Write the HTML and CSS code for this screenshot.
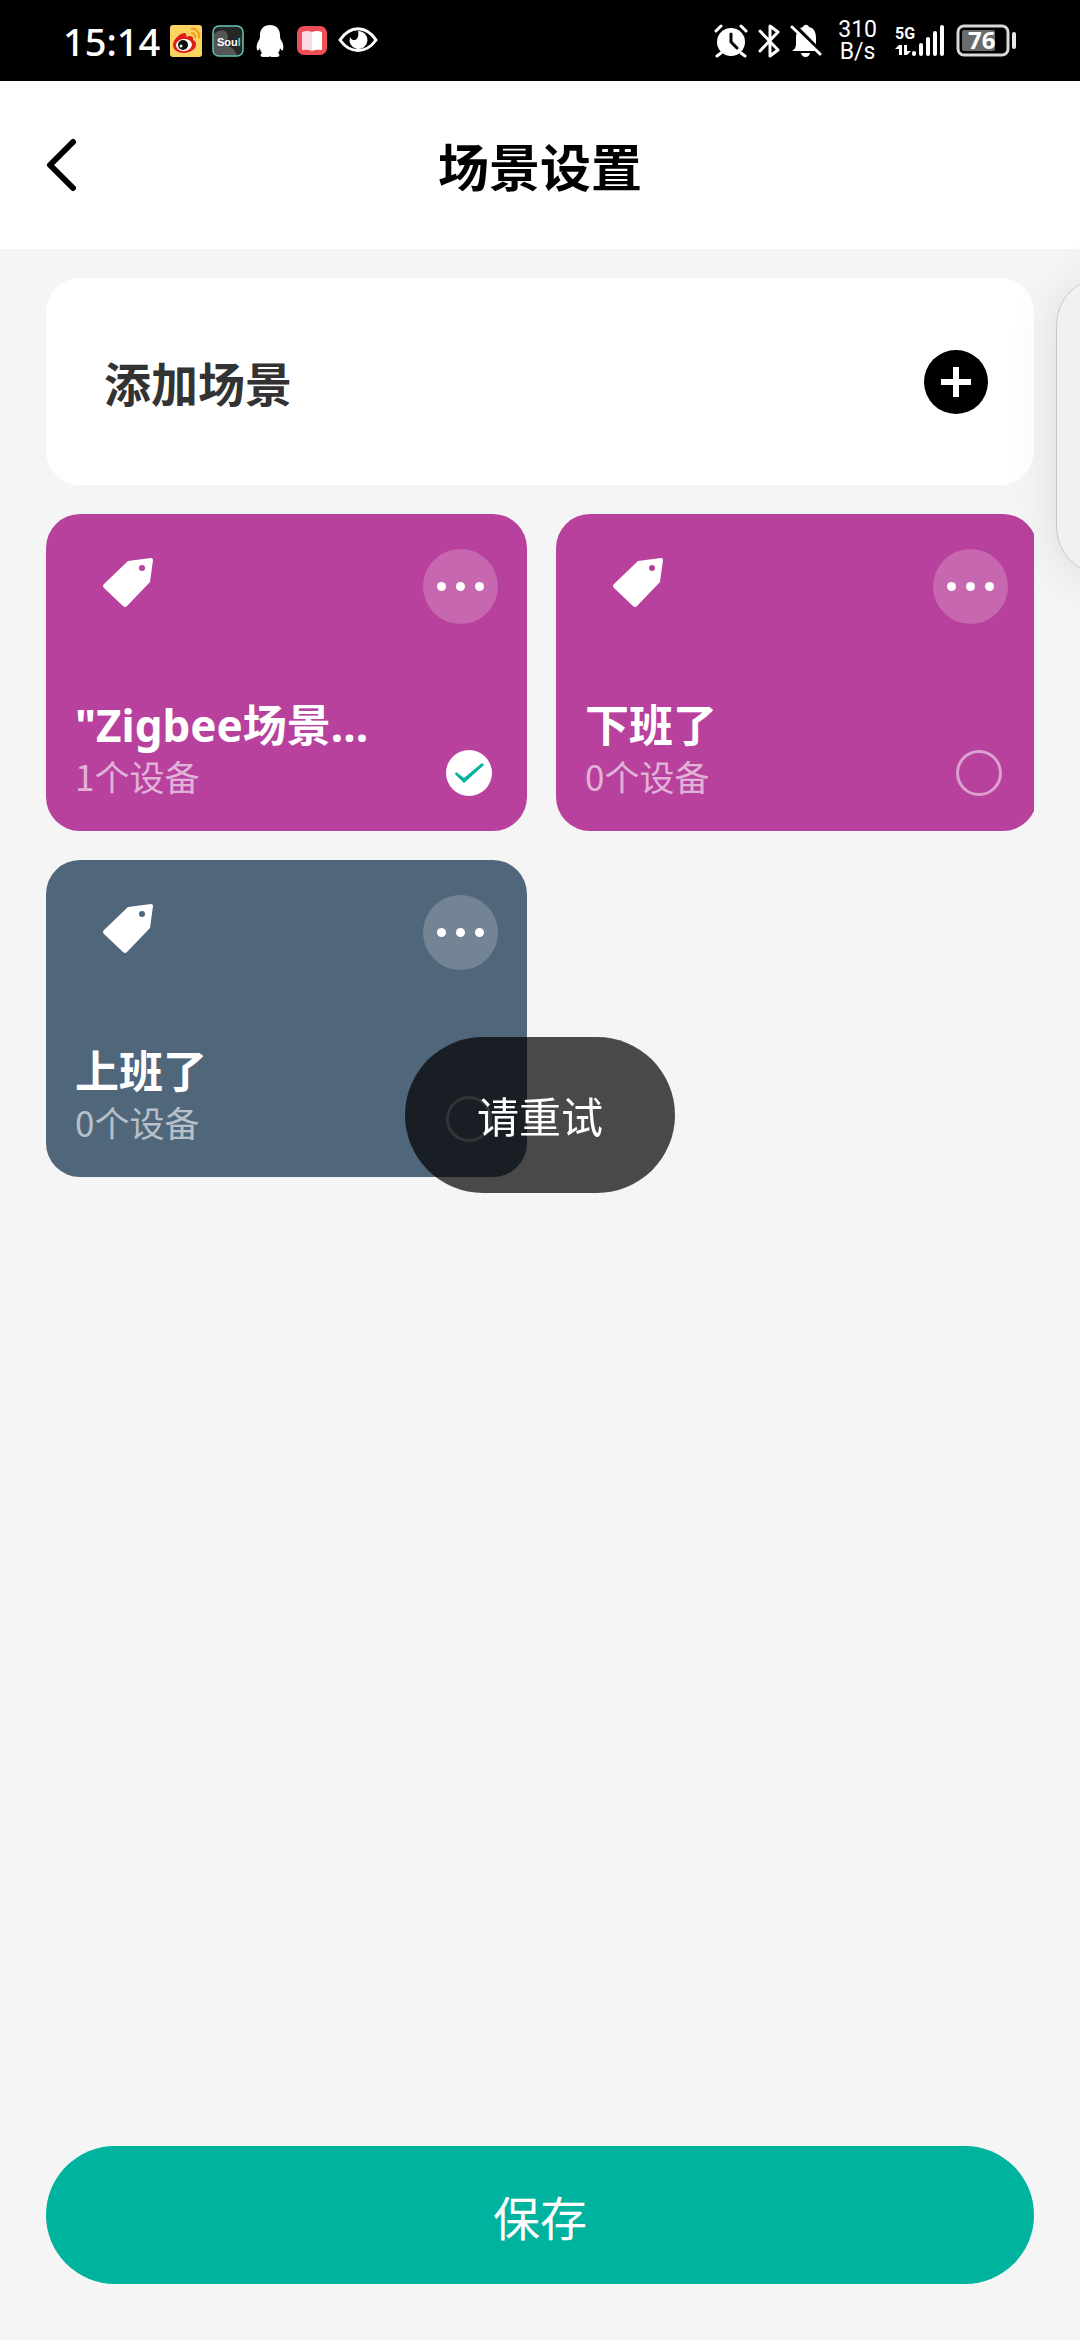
FILE: index.html
```html
<!DOCTYPE html>
<html lang="zh-CN">

<head>
  <meta charset="utf-8">
  <meta name="viewport" content="width=device-width, initial-scale=1.0">
  <title>场景设置</title>
  <link rel="stylesheet" href="styles.css">
</head>

<body>
  <div class="status">
    <div class="status-left">
      <span class="time">15:14</span>
      <!-- weibo -->
      <svg width="32" height="32" viewBox="0 0 32 32">
        <rect width="32" height="32" rx="3" fill="#fbd460" />
        <path d="M3 20C3 15 9 9 14 8c2 0 3 1 2 4 4-2 8-1 7 3 3 1 3 3 3 5 0 4-6 8-12 8S3 25 3 20z" fill="#dc1f1a" />
        <ellipse cx="14" cy="20" rx="8" ry="6" fill="#fff" transform="rotate(-8 14 20)" />
        <circle cx="13" cy="20" r="5" fill="#111" />
        <circle cx="11" cy="21" r="1.5" fill="#fff" />
        <path d="M21 4c5-1 9 3 8 9M21 8c3 0 5 2 4 5" fill="none" stroke="#f39a1d" stroke-width="2" />
      </svg>
      <svg width="32" height="32" viewBox="0 0 32 32">
        <rect x="1" y="1" width="30" height="30" rx="6" fill="#262626" stroke="#68c9bc" stroke-width="1.5" />
        <path d="M2 9c8-7 14-3 14 3l-2 9c4 0 8 2 11 9H7c-3 0-5-2-5-5z" fill="#555" />
        <text x="5" y="21" class="soul">Sou<tspan fill="#4fd6c6">l</tspan></text>
      </svg>
      <svg width="32" height="32" viewBox="0 0 32 32">
        <path d="M16 0c6 0 10 4 10 10 0 2 0 3 1 5 2 3 3 6 2 10-1 1-2 0-3-2 0 2-1 4-2 5 2 1 2 4-1 4h-6l-1-1-1 1H9c-3 0-3-3-1-4-1-1-2-3-2-5-1 2-2 3-3 2-1-4 0-7 2-10 1-2 1-3 1-5C6 4 10 0 16 0z" fill="#fff" />
      </svg>
      <svg width="32" height="32" viewBox="0 0 32 32">
        <rect x="1" y="1" width="30" height="29" rx="7" fill="#ee4e56" />
        <path d="M6 7q6-2 10 0v19q-4-2-10-1z" fill="#fbd9e4" />
        <path d="M16 7q5-2 10 0v18q-6-1-10 1z" fill="#fff" />
      </svg>
      <svg width="40" height="32" viewBox="0 0 40 32">
        <path d="M2 15C12 0 28 0 38 15 28 29 12 29 2 15z" fill="none" stroke="#fff" stroke-width="3" />
        <path d="M20 6a9 9 0 1 1-8 6c3 6 10 3 8-6z" fill="#fff" />
      </svg>
    </div>
    <div class="status-right">
      <!-- alarm -->
      <svg width="34" height="34" viewBox="0 0 34 34">
        <circle cx="17" cy="18" r="14" fill="#fff" />
        <path d="M2 7l5-5M32 7l-5-5M7 29l-4 3M27 29l4 3" stroke="#fff" stroke-width="3" stroke-linecap="round" />
        <path d="M17 10v8l6 6" fill="none" stroke="#000" stroke-width="3" stroke-linecap="round" />
      </svg>
      <!-- bluetooth -->
      <svg width="22" height="34" viewBox="0 0 22 34">
        <path d="M2 7l18 19-8 6V2l8 6L2 27" fill="none" stroke="#fff" stroke-width="3" stroke-linejoin="round" stroke-linecap="round" />
      </svg>
      <!-- muted bell -->
      <svg width="32" height="34" viewBox="0 0 32 34">
        <path d="M2 27c3-2 4-4 4-7v-6c0-6 3-10 7-11 1-3 5-3 6 0 5 1 7 5 7 11v6c0 3 1 5 4 7z" fill="#fff" />
        <path d="M11 29h9q-1 4-4.500 4T11 29z" fill="#fff" />
        <path d="M4 1l29 29" stroke="#000" stroke-width="4" />
        <path d="M2 3l28 27" stroke="#fff" stroke-width="3" stroke-linecap="round" />
      </svg>
      <div class="net"><span>310</span><span>B/s</span></div>
      <!-- signal -->
      <svg class="signal" width="50" height="34" viewBox="0 0 50 34">
        <text x="0" y="15" class="fiveg">5G</text>
        <path d="M0 25l4-4h3v10H4v-6zM9 21h3v6h4l-4 4H9z" fill="#fff" />
        <path d="M19 29v1M26 21v9M33 15v15M40 9v21M47 3v27" stroke="#fff" stroke-width="4" stroke-linecap="round" />
      </svg>
      <!-- battery -->
      <svg width="61" height="34" viewBox="0 0 61 34">
        <rect x="2" y="2" width="50" height="29" rx="6" fill="none" stroke="#d8d8d8" stroke-width="3" />
        <rect x="6" y="6" width="33" height="21" rx="2" fill="#6b6b6b" />
        <path d="M58 10v13" stroke="#e8e8e8" stroke-width="4" stroke-linecap="round" />
        <text x="12" y="25" class="battery">76</text>
      </svg>
    </div>
  </div>

  <header class="header">
    <button class="back" type="button" aria-label="返回">
      <svg width="30" height="54" viewBox="0 0 30 54">
        <path d="M27 4L4 27l23 23" fill="none" stroke="#000" stroke-width="6" stroke-linecap="round" stroke-linejoin="round" />
      </svg>
    </button>
    <h1>场景设置</h1>
  </header>

  <main class="main">
    <div class="add">
      <h2>添加场景</h2>
      <button class="add-btn" type="button" aria-label="添加">
        <svg width="64" height="64" viewBox="0 0 64 64">
          <circle cx="32" cy="32" r="32" fill="#000" />
          <path d="M17 32h30M32 17v30" stroke="#fff" stroke-width="6" />
        </svg>
      </button>
    </div>

    <div class="scenes">
      <div class="scene">
        <div class="scene-top">
          <svg class="tag" width="50" height="50" viewBox="0 0 50 50">
            <path d="M25 4L48 1q2 0 2 2l-3 22-23 24q-2 2-4 0L1 31q-2-2 0-4z" fill="#fff" />
            <circle cx="39" cy="11" r="3" fill="#b8419d" />
          </svg>
          <button class="more" type="button" aria-label="更多"><i></i><i></i><i></i></button>
        </div>
        <div class="scene-bottom">
          <label for="scene1">
            <span class="name">"Zigbee场景…</span>
            <span class="count">1个设备</span>
          </label>
          <input type="radio" name="scene" id="scene1" checked>
        </div>
      </div>

      <div class="scene">
        <div class="scene-top">
          <svg class="tag" width="50" height="50" viewBox="0 0 50 50">
            <path d="M25 4L48 1q2 0 2 2l-3 22-23 24q-2 2-4 0L1 31q-2-2 0-4z" fill="#fff" />
            <circle cx="39" cy="11" r="3" fill="#b8419d" />
          </svg>
          <button class="more" type="button" aria-label="更多"><i></i><i></i><i></i></button>
        </div>
        <div class="scene-bottom">
          <label for="scene2">
            <span class="name">下班了</span>
            <span class="count">0个设备</span>
          </label>
          <input type="radio" name="scene" id="scene2">
        </div>
      </div>

      <div class="scene slate">
        <div class="scene-top">
          <svg class="tag" width="50" height="50" viewBox="0 0 50 50">
            <path d="M25 4L48 1q2 0 2 2l-3 22-23 24q-2 2-4 0L1 31q-2-2 0-4z" fill="#fff" />
            <circle cx="39" cy="11" r="3" fill="#50667a" />
          </svg>
          <button class="more" type="button" aria-label="更多"><i></i><i></i><i></i></button>
        </div>
        <div class="scene-bottom">
          <label for="scene3">
            <span class="name">上班了</span>
            <span class="count">0个设备</span>
          </label>
          <input type="radio" name="scene" id="scene3">
        </div>
      </div>
    </div>
  </main>

  <footer class="footer">
    <button class="save" type="button">保存</button>
  </footer>

  <div class="side-panel"></div>
  <div class="toast" role="status">请重试</div>
</body>

</html>
```

FILE: styles.css
```css
* {
  box-sizing: border-box;
}

body {
  margin: 0;
  min-height: 100vh;
  display: flex;
  flex-direction: column;
  background-color: #f5f5f5;
  font-family: "Noto Sans CJK SC", sans-serif;
}

button {
  padding: 0;
  border: none;
  background: none;
  font-family: inherit;
  cursor: pointer;
}

svg {
  display: block;
}

/* status bar */
.status {
  display: flex;
  justify-content: space-between;
  align-items: center;
  height: 81px;
  padding: 0 63px;
  background-color: black;
  color: white;
}

.status-left,
.status-right {
  display: flex;
  align-items: center;
  gap: 10px;
}

.time {
  font-family: "Noto Sans", sans-serif;
  font-size: 38px;
  font-weight: 500;
  line-height: 40px;
}

.soul {
  font-family: "Liberation Sans Narrow", "Liberation Sans", sans-serif;
  font-size: 11px;
  font-weight: bold;
  fill: white;
}

.net {
  display: flex;
  flex-direction: column;
  margin-left: 6px;
  font-family: Roboto, sans-serif;
  font-size: 23px;
  line-height: 22px;
  text-align: center;
}

.signal {
  margin: 0 1px 0 8px;
}

.fiveg {
  font-family: "Liberation Sans Narrow", Roboto, sans-serif;
  font-size: 16px;
  font-weight: bold;
  fill: white;
}

.battery {
  font-family: "Noto Sans", sans-serif;
  font-size: 24px;
  font-weight: bold;
  fill: white;
}

/* title bar */
.header {
  display: grid;
  grid-template-columns: 30px 1fr 30px;
  align-items: center;
  height: 168px;
  padding: 0 46px;
  background-color: white;
}

h1 {
  margin: 0;
  font-size: 51px;
  line-height: 60px;
  text-align: center;
}

.main {
  flex: 1;
  padding: 29px 46px;
}

.add {
  display: flex;
  justify-content: space-between;
  align-items: center;
  height: 207px;
  margin-bottom: 29px;
  padding: 0 46px 0 58px;
  border-radius: 34px;
  background-color: white;
}

h2 {
  margin: 0;
  color: #333;
  font-size: 47px;
  line-height: 60px;
}

/* the second column runs a little past the edge and is cut off */
.scenes {
  display: grid;
  grid-template-columns: repeat(2, calc(50% - 13px));
  gap: 29px;
  overflow: hidden;
}

.scene {
  display: flex;
  flex-direction: column;
  justify-content: space-between;
  height: 317px;
  padding: 35px 29px;
  border-radius: 34px;
  background-color: #b8419d;
  color: white;
}

.slate {
  background-color: #50667a;
}

.scene-top {
  display: flex;
  justify-content: space-between;
  padding-left: 28px;
}

.tag {
  margin-top: 8px;
}

.more {
  display: flex;
  justify-content: center;
  align-items: center;
  gap: 10px;
  width: 75px;
  height: 75px;
  border-radius: 50%;
  background-color: rgba(255, 255, 255, 0.2);
}

.more i {
  width: 9px;
  height: 9px;
  border-radius: 50%;
  background-color: white;
}

.scene-bottom {
  display: flex;
  justify-content: space-between;
  align-items: flex-end;
  padding-right: 6px;
}

.name,
.count {
  display: block;
}

.name {
  font-family: "Noto Sans", "Noto Sans CJK SC", sans-serif;
  font-size: 44px;
  font-weight: bold;
  line-height: 62px;
}

.count {
  color: rgba(255, 255, 255, 0.6);
  font-size: 35px;
  line-height: 40px;
}

input[type="radio"] {
  appearance: none;
  width: 46px;
  height: 46px;
  margin: 0;
  border: 3px solid rgba(255, 255, 255, 0.5);
  border-radius: 50%;
}

input[type="radio"]:checked {
  border: none;
  background-color: white;
}

input[type="radio"]:checked::before {
  content: "";
  display: block;
  width: 46px;
  height: 46px;
  background-color: #00b39f;
  clip-path: polygon(10px 22px, 18px 28px, 36px 13px, 38px 15px, 18px 33px, 9px 24px);
}

.footer {
  padding: 0 46px 56px;
}

.save {
  display: block;
  width: 100%;
  height: 138px;
  border-radius: 69px;
  background-color: #00b39f;
  color: white;
  font-size: 47px;
}

/* system edge panel peeking in from the right */
.side-panel {
  position: fixed;
  top: 277px;
  right: -76px;
  width: 100px;
  height: 298px;
  border: 1px solid #c8c8c8;
  border-radius: 48px;
  background-color: #f1f1f1;
  box-shadow: 0 4px 50px rgba(0, 0, 0, 0.1);
}

.toast {
  position: fixed;
  top: 1037px;
  left: 50%;
  transform: translateX(-50%);
  padding: 48px 72px;
  border-radius: 78px;
  background-color: rgba(0, 0, 0, 0.7);
  color: white;
  font-size: 42px;
  line-height: 60px;
  white-space: nowrap;
}
```
